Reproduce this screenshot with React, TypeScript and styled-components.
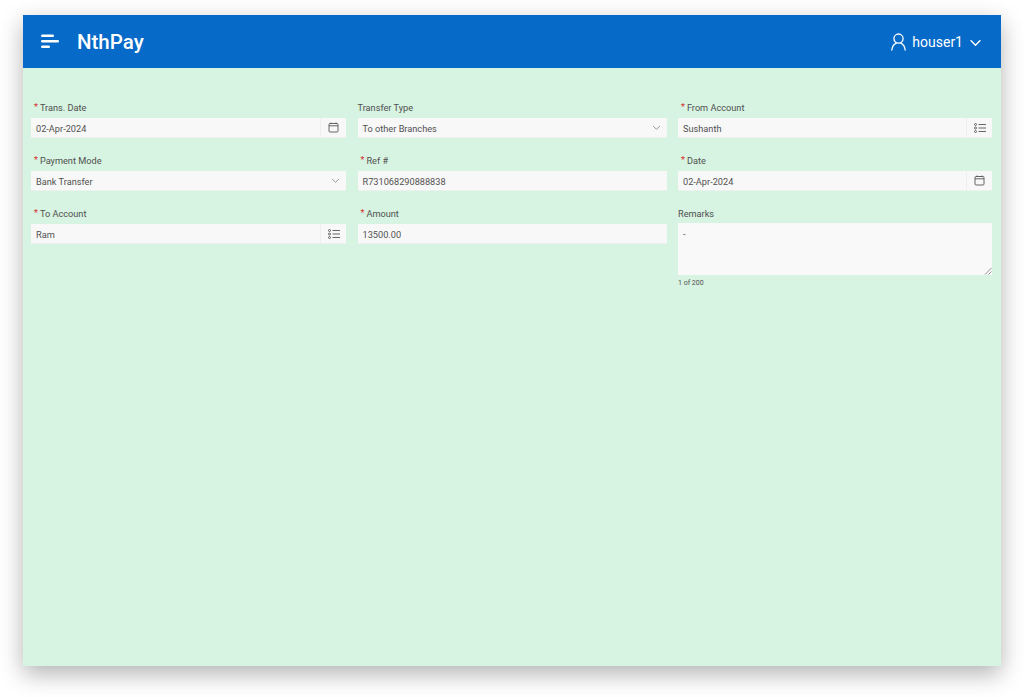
import styled, { createGlobalStyle } from 'styled-components';

const GlobalStyle = createGlobalStyle`
  html, body {
    margin: 0;
    padding: 0;
    background: #fff;
  }
  body {
    font-family: Roboto, "Noto Sans", "Liberation Sans", sans-serif;
  }
`;

const Page = styled.div`
  box-sizing: border-box;
  width: 1024px;
  height: 697px;
  padding: 15px 23px 31px;
  overflow: hidden;
`;

const Window = styled.div`
  display: flex;
  flex-direction: column;
  height: 100%;
  background: #d7f3e1;
  box-shadow: 0 8px 22px rgba(0, 0, 0, 0.3);
`;

const Header = styled.header`
  display: flex;
  align-items: center;
  justify-content: space-between;
  height: 53px;
  padding: 1px 19px 0 18px;
  box-sizing: border-box;
  background: #056ac8;
  color: #fff;
`;

const Brand = styled.div`
  display: flex;
  align-items: center;
  gap: 18px;
`;

const Menu = styled.svg`
  display: block;
  width: 18px;
  height: 14px;
  margin-top: -2px;
`;

const Title = styled.span`
  font-size: 20.5px;
  font-weight: 500;
  line-height: 24px;
`;

const User = styled.div`
  display: flex;
  align-items: center;
  gap: 6px;
  font-size: 14px;
`;

const Form = styled.main`
  display: grid;
  grid-template-columns: 315px 309px 314px;
  column-gap: 11.5px;
  align-items: start;
  padding: 32px 9px 0 8px;
`;

const Column = styled.div`
  display: flex;
  flex-direction: column;
`;

const Field = styled.div`
  display: flex;
  flex-direction: column;
  height: 53px;
`;

const Label = styled.label<{ $compact?: boolean }>`
  display: flex;
  align-items: flex-start;
  height: ${(p) => (p.$compact ? 17 : 18)}px;
  font-size: 9.2px;
  line-height: 16px;
  color: #505050;
`;

const Star = styled.span`
  margin: 0 2px 0 3px;
  color: #d92b2b;
  font-size: 9px;
  line-height: 14px;
`;

const Control = styled.div`
  display: flex;
  align-items: stretch;
  height: 20px;
  background: #f8f8f8;
  border-bottom: 1px solid #eef2ef;
  box-sizing: border-box;
`;

const Value = styled.span`
  flex: 1;
  padding-left: 5px;
  font-size: 9.2px;
  line-height: 21px;
  color: #505050;
`;

const Addon = styled.span`
  display: flex;
  align-items: center;
  justify-content: center;
  width: 25px;
  color: #555;
  border-left: 1px solid #efefef;
`;

const Chevron = styled.span`
  display: flex;
  align-items: center;
  justify-content: center;
  width: 21px;
  color: #777;
`;

const TextArea = styled.div`
  position: relative;
  box-sizing: border-box;
  height: 52px;
  padding: 4px 5px;
  background: #f9f9f9;
  font-size: 9.2px;
  line-height: 14px;
  color: #555;
`;

const Grip = styled.svg`
  position: absolute;
  right: 0;
  bottom: 0;
  width: 8px;
  height: 8px;
`;

const Count = styled.div`
  margin-top: 2px;
  font-size: 7px;
  line-height: 12px;
  color: #505050;
`;

const CalendarIcon = () => (
  <svg width="11" height="11" viewBox="0 0 11 11" fill="none" stroke="currentColor" strokeWidth="0.9">
    <rect x="1" y="1.5" width="9" height="8.5" rx="1" />
    <path d="M1 3.8h9M3 .5v1.5M8 .5v1.5" />
  </svg>
);

const ListIcon = () => (
  <svg width="12" height="10" viewBox="0 0 12 10" fill="none" stroke="currentColor" strokeWidth="0.9">
    <circle cx="1.5" cy="1.5" r="1" />
    <circle cx="1.5" cy="5" r="1" />
    <circle cx="1.5" cy="8.5" r="1" />
    <path d="M4.5 1.5H12M4.5 5H12M4.5 8.5H12" />
  </svg>
);

const ChevronIcon = ({ size, width }: { size: number; width: number }) => (
  <svg width={size} height={size} viewBox="0 0 12 12" fill="none" stroke="currentColor" strokeWidth={width}>
    <path d="M1.5 4l4.5 4.5L10.5 4" />
  </svg>
);

type Addition = 'date' | 'list' | 'select';

type FieldItem = {
  label: string;
  value: string;
  required?: boolean;
  addition?: Addition;
};

const columns: FieldItem[][] = [
  [
    { label: 'Trans. Date', value: '02-Apr-2024', required: true, addition: 'date' },
    { label: 'Payment Mode', value: 'Bank Transfer', required: true, addition: 'select' },
    { label: 'To Account', value: 'Ram', required: true, addition: 'list' },
  ],
  [
    { label: 'Transfer Type', value: 'To other Branches', addition: 'select' },
    { label: 'Ref #', value: 'R731068290888838', required: true },
    { label: 'Amount', value: '13500.00', required: true },
  ],
  [
    { label: 'From Account', value: 'Sushanth', required: true, addition: 'list' },
    { label: 'Date', value: '02-Apr-2024', required: true, addition: 'date' },
  ],
];

const FormField = ({ label, value, required, addition }: FieldItem) => (
  <Field>
    <Label>
      {required && <Star>*</Star>}
      {label}
    </Label>
    <Control>
      <Value>{value}</Value>
      {addition === 'date' && (
        <Addon>
          <CalendarIcon />
        </Addon>
      )}
      {addition === 'list' && (
        <Addon>
          <ListIcon />
        </Addon>
      )}
      {addition === 'select' && (
        <Chevron>
          <ChevronIcon size={9} width={1} />
        </Chevron>
      )}
    </Control>
  </Field>
);

const App = () => (
  <Page>
    <GlobalStyle />
    <Window>
      <Header>
        <Brand>
          <Menu viewBox="0 0 18 14" fill="#fff">
            <rect x="0" y="0.5" width="13" height="2.4" rx="1.2" />
            <rect x="0" y="6" width="18" height="2.4" rx="1.2" />
            <rect x="0" y="11.5" width="9" height="2.4" rx="1.2" />
          </Menu>
          <Title>NthPay</Title>
        </Brand>
        <User>
          <svg width="15" height="18" viewBox="0 0 15 18" fill="none" stroke="#fff" strokeWidth="1.3">
            <circle cx="7.5" cy="5.6" r="4.6" />
            <path d="M.8 17c.4-3.4 2.4-5.8 4.4-6.8M14.2 17c-.4-3.4-2.4-5.8-4.4-6.8" strokeLinecap="round" />
          </svg>
          <span>houser1</span>
          <ChevronIcon size={13} width={1.3} />
        </User>
      </Header>
      <Form>
        {columns.map((items, index) => (
          <Column key={index}>
            {items.map((item) => (
              <FormField key={item.label} {...item} />
            ))}
            {index === 2 && (
              <>
                <Label $compact>Remarks</Label>
                <TextArea>
                  -
                  <Grip viewBox="0 0 8 8" stroke="#777" strokeWidth="0.8">
                    <path d="M1 7.5L7.5 1M4.5 7.5L7.5 4.5" />
                  </Grip>
                </TextArea>
                <Count>1 of 200</Count>
              </>
            )}
          </Column>
        ))}
      </Form>
    </Window>
  </Page>
);

export default App;
